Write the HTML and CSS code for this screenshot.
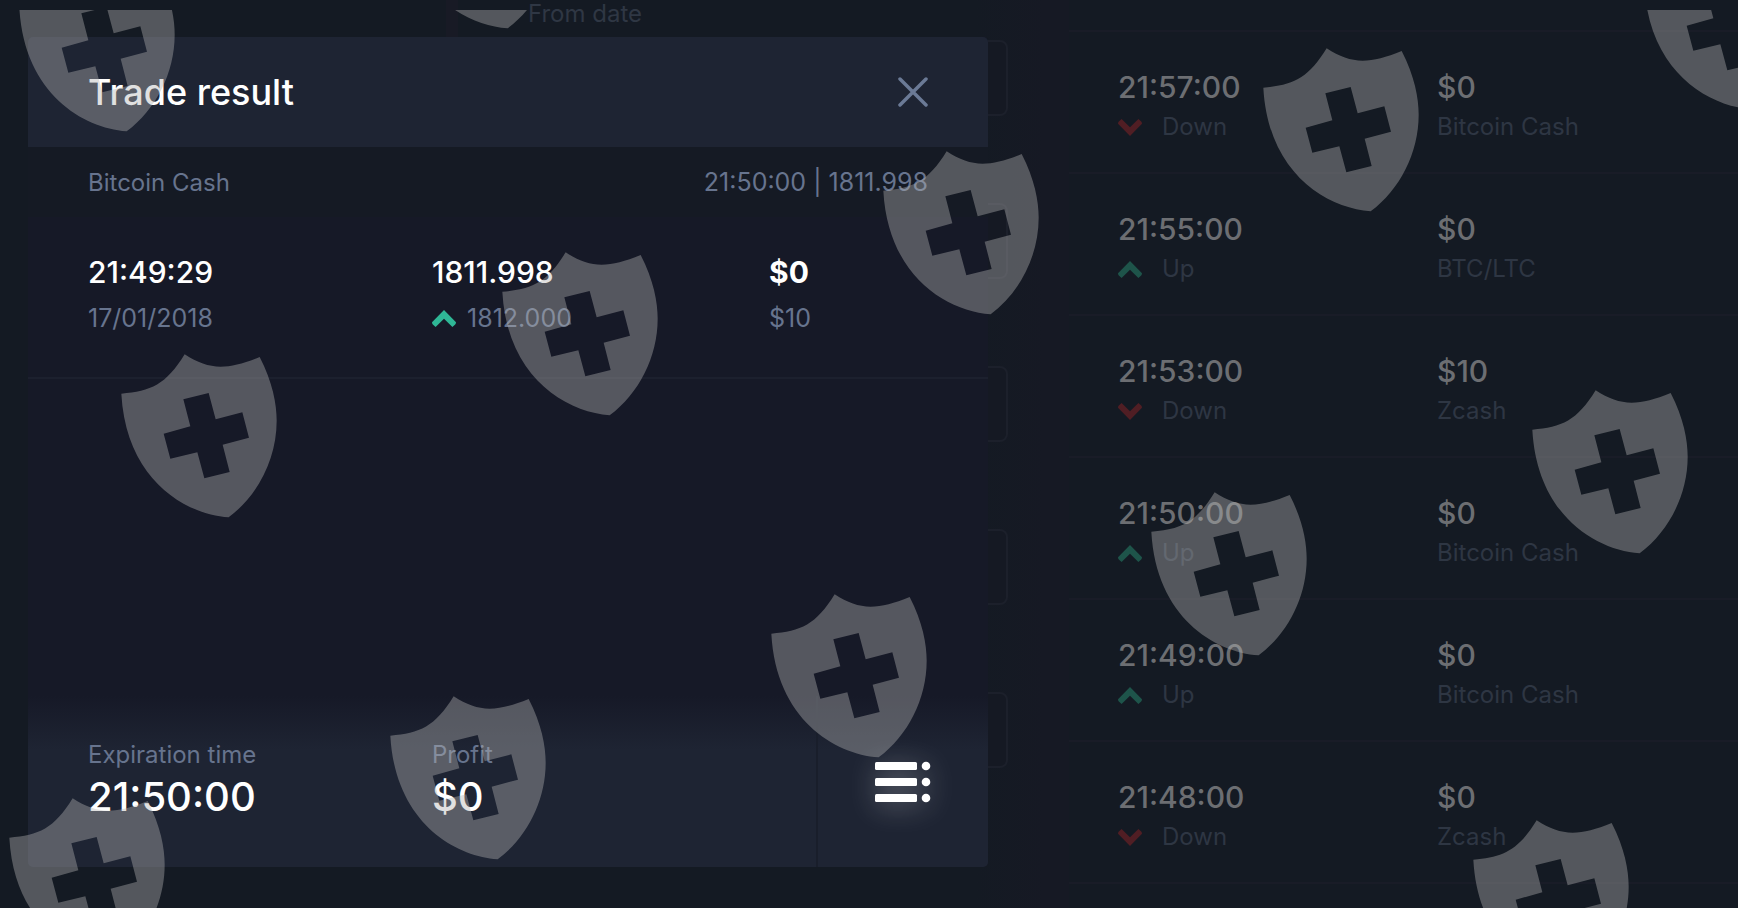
FILE: index.html
```
<!DOCTYPE html>
<html lang="en">
<head>
    <meta charset="UTF-8">
    <meta name="viewport" content="width=device-width, initial-scale=1.0">
    <title>Trade result</title>
    <link rel="stylesheet" href="styles.css">
</head>
<body>
    <!-- Shared icons -->
    <svg class="sprite" aria-hidden="true">
        <symbol id="chevron" viewBox="0 0 24 17">
            <path d="M12 0 L24 12.2 Q24 13.5 23.2 14.4 L20.4 17 L12 8.8 L3.6 17 L0.8 14.4 Q0 13.5 0 12.2 Z"/>
        </symbol>
        <symbol id="shield" viewBox="0 0 468 492">
            <path fill-rule="evenodd" d="M1 119 C90 112 135 92 191 1 C265 50 320 48 416 9 C455 85 467 150 467 200 C467 315 410 425 323 490 C190 480 15 375 1 119 Z M187 136 L208 217 L128 239 L148 314 L229 295 L250 373 L326 354 L305 272 L384 251 L364 175 L284 196 L263 117 Z"/>
        </symbol>
    </svg>

    <div class="page">
        <div class="sidebar"></div>

        <form class="filters">
            <label for="fromDate">From date</label>
            <input type="text" id="fromDate">
            <input type="text" aria-label="To date">
            <input type="text" aria-label="Asset">
            <input type="text" aria-label="Direction">
            <input type="text" aria-label="Amount">
        </form>

        <div class="history">
            <table>
                <tr>
                    <td><div class="value">21:57:00</div><div class="sub"><svg class="chevron down"><use href="#chevron"/></svg>Down</div></td>
                    <td><div class="value">$0</div><div class="sub">Bitcoin Cash</div></td>
                </tr>
                <tr>
                    <td><div class="value">21:55:00</div><div class="sub"><svg class="chevron up"><use href="#chevron"/></svg>Up</div></td>
                    <td><div class="value">$0</div><div class="sub">BTC/LTC</div></td>
                </tr>
                <tr>
                    <td><div class="value">21:53:00</div><div class="sub"><svg class="chevron down"><use href="#chevron"/></svg>Down</div></td>
                    <td><div class="value">$10</div><div class="sub">Zcash</div></td>
                </tr>
                <tr>
                    <td><div class="value">21:50:00</div><div class="sub"><svg class="chevron up"><use href="#chevron"/></svg>Up</div></td>
                    <td><div class="value">$0</div><div class="sub">Bitcoin Cash</div></td>
                </tr>
                <tr>
                    <td><div class="value">21:49:00</div><div class="sub"><svg class="chevron up"><use href="#chevron"/></svg>Up</div></td>
                    <td><div class="value">$0</div><div class="sub">Bitcoin Cash</div></td>
                </tr>
                <tr>
                    <td><div class="value">21:48:00</div><div class="sub"><svg class="chevron down"><use href="#chevron"/></svg>Down</div></td>
                    <td><div class="value">$0</div><div class="sub">Zcash</div></td>
                </tr>
            </table>
        </div>
    </div>

    <!-- Trade result window -->
    <div class="overlay">
        <div class="modal" role="dialog" aria-labelledby="modalTitle">
            <div class="modal-header">
                <h1 id="modalTitle">Trade result</h1>
                <button type="button" class="close" aria-label="Close">
                    <svg viewBox="0 0 30 30"><path d="M2 2 L28 28 M28 2 L2 28"/></svg>
                </button>
            </div>
            <div class="modal-asset">
                <span>Bitcoin Cash</span>
                <span class="quote">21:50:00 | 1811.998</span>
            </div>
            <div class="modal-body">
                <table>
                    <tr>
                        <td><div class="value">21:49:29</div><div class="sub">17/01/2018</div></td>
                        <td><div class="value">1811.998</div><div class="sub"><svg class="chevron up"><use href="#chevron"/></svg>1812.000</div></td>
                        <td><div class="value bold">$0</div><div class="sub">$10</div></td>
                    </tr>
                </table>
            </div>
            <div class="modal-footer">
                <div class="summary">
                    <div class="sub">Expiration time</div>
                    <div class="total">21:50:00</div>
                </div>
                <div class="summary">
                    <div class="sub">Profit</div>
                    <div class="total">$0</div>
                </div>
                <button type="button" class="details" aria-label="Details">
                    <svg viewBox="0 0 56 40">
                        <rect x="0" y="0" width="42" height="8" rx="1.5"/>
                        <rect x="0" y="16" width="42" height="8" rx="1.5"/>
                        <rect x="0" y="32" width="42" height="8" rx="1.5"/>
                        <circle cx="51" cy="4" r="4.3"/>
                        <circle cx="51" cy="20" r="4.3"/>
                        <circle cx="51" cy="36" r="4.3"/>
                    </svg>
                </button>
            </div>
        </div>
    </div>

    <!-- Watermark -->
    <svg class="watermark" aria-hidden="true">
        <use href="#shield" x="19" y="-42" width="156" height="164"/>
        <use href="#shield" x="400" y="-145" width="156" height="164"/>
        <use href="#shield" x="121" y="344" width="156" height="164"/>
        <use href="#shield" x="502" y="242" width="156" height="164"/>
        <use href="#shield" x="883" y="141" width="156" height="164"/>
        <use href="#shield" x="1263" y="38" width="156" height="164"/>
        <use href="#shield" x="1644" y="-64" width="156" height="164"/>
        <use href="#shield" x="9" y="788" width="156" height="164"/>
        <use href="#shield" x="390" y="686" width="156" height="164"/>
        <use href="#shield" x="771" y="584" width="156" height="164"/>
        <use href="#shield" x="1151" y="482" width="156" height="164"/>
        <use href="#shield" x="1532" y="380" width="156" height="164"/>
        <use href="#shield" x="1473" y="810" width="156" height="164"/>
    </svg>
</body>
</html>
```
FILE: styles.css
```
* {
    box-sizing: border-box;
}

body {
    margin: 0;
    height: 100vh;
    overflow: hidden;
    position: relative;
    background-color: #141a23;
    color: #ffffff;
    font-family: Inter, "Liberation Sans", sans-serif;
    font-size: 24px;
}

button {
    padding: 0;
    border: none;
    background: none;
    cursor: pointer;
}

table {
    width: 100%;
    border-collapse: collapse;
    table-layout: fixed;
}

td {
    padding: 0;
    vertical-align: top;
}

.sprite {
    display: none;
}

.chevron {
    width: 24px;
    height: 17px;
    flex: none;
}

.value {
    font-size: 30px;
    font-weight: 500;
}

.sub {
    display: flex;
    align-items: center;
}

/* Dimmed page behind the window */
.page {
    display: grid;
    grid-template-columns: 458fr 610fr 670fr;
    height: 100%;
    overflow: hidden;
}

.sidebar {
    margin-bottom: 60px;
    border-right: 12px solid #181a25;
}

.filters {
    display: flex;
    flex-direction: column;
    padding: 0 60px 0 70px;
    background: linear-gradient(to right, #141a23 85%, #161924 96%);
}

.filters label {
    height: 40px;
    line-height: 28px;
    color: #2f3744;
}

.filters input {
    flex: none;
    height: 76px;
    margin-bottom: 87px;
    border: 2px solid #1c202b;
    border-radius: 8px;
    background-color: #151923;
    color: #6c6f74;
    font: inherit;
}

.history {
    padding-top: 30px;
    border-left: 1px solid #161924;
    color: #6c6e72;
}

.history tr {
    height: 142px;
    border-top: 2px solid #191c27;
    border-bottom: 2px solid #191c27;
}

.history td {
    padding-top: 35px;
}

.history td:first-child {
    width: 368px;
    padding-left: 49px;
}

.history .value,
.history .sub {
    line-height: 40px;
}

.history .sub {
    gap: 20px;
    color: #2e3643;
}

.history .up {
    fill: #1e544a;
}

.history .down {
    fill: #501e24;
}

.down {
    transform: rotate(180deg);
}

/* Window */
.overlay {
    position: absolute;
    inset: 0;
    padding: 37px 28px 41px;
}

.modal {
    display: flex;
    flex-direction: column;
    max-width: 960px;
    height: 100%;
    border-radius: 5px;
    overflow: hidden;
    background-color: #161927;
}

.modal-header {
    display: flex;
    align-items: center;
    justify-content: space-between;
    height: 110px;
    padding: 0 60px;
    background-color: #1e2433;
}

.modal-header h1 {
    margin: 0;
    font-size: 36px;
    font-weight: 500;
}

.close {
    width: 30px;
    height: 30px;
}

.close svg {
    display: block;
    fill: none;
    stroke: #6b7a96;
    stroke-width: 3.5;
    stroke-linecap: round;
}

.modal-asset {
    display: flex;
    align-items: center;
    justify-content: space-between;
    height: 70px;
    padding: 0 60px;
    background-color: #151a24;
    color: #67748e;
}

.modal-body {
    flex: 1;
}

.modal-body tr {
    height: 161px;
    border-bottom: 2px solid #1c202e;
}

.modal-body td {
    padding-top: 32px;
}

.modal-body td:first-child {
    width: 404px;
    padding-left: 60px;
}

.modal-body td:nth-child(2) {
    width: 337px;
}

.modal-body .value,
.modal-body .sub {
    line-height: 46px;
}

.modal .sub {
    gap: 11px;
    color: #67748e;
}

.quote,
.modal-body .sub {
    font-size: 25px;
}

.modal .up {
    fill: #2fb796;
}

.bold {
    font-weight: 700;
}

.modal-footer {
    display: grid;
    grid-template-columns: 404fr 384fr 172fr;
    height: 171px;
    background: linear-gradient(#161927, #1e2433 54px);
}

.summary {
    padding-top: 38px;
    line-height: 42px;
}

.summary:first-child {
    padding-left: 60px;
}

.total {
    font-size: 40px;
    font-weight: 500;
}

.details {
    display: flex;
    align-items: center;
    justify-content: center;
    border-left: 2px solid #191e2b;
}

.details svg {
    width: 56px;
    height: 40px;
    fill: #ffffff;
    overflow: visible;
    filter: drop-shadow(0 4px 14px rgba(255, 255, 255, 0.35));
}

.watermark {
    position: absolute;
    top: 10px;
    left: 0;
    width: 100%;
    height: calc(100% - 10px);
    fill: #b4b4b4;
    opacity: 0.4;
    pointer-events: none;
}
```
